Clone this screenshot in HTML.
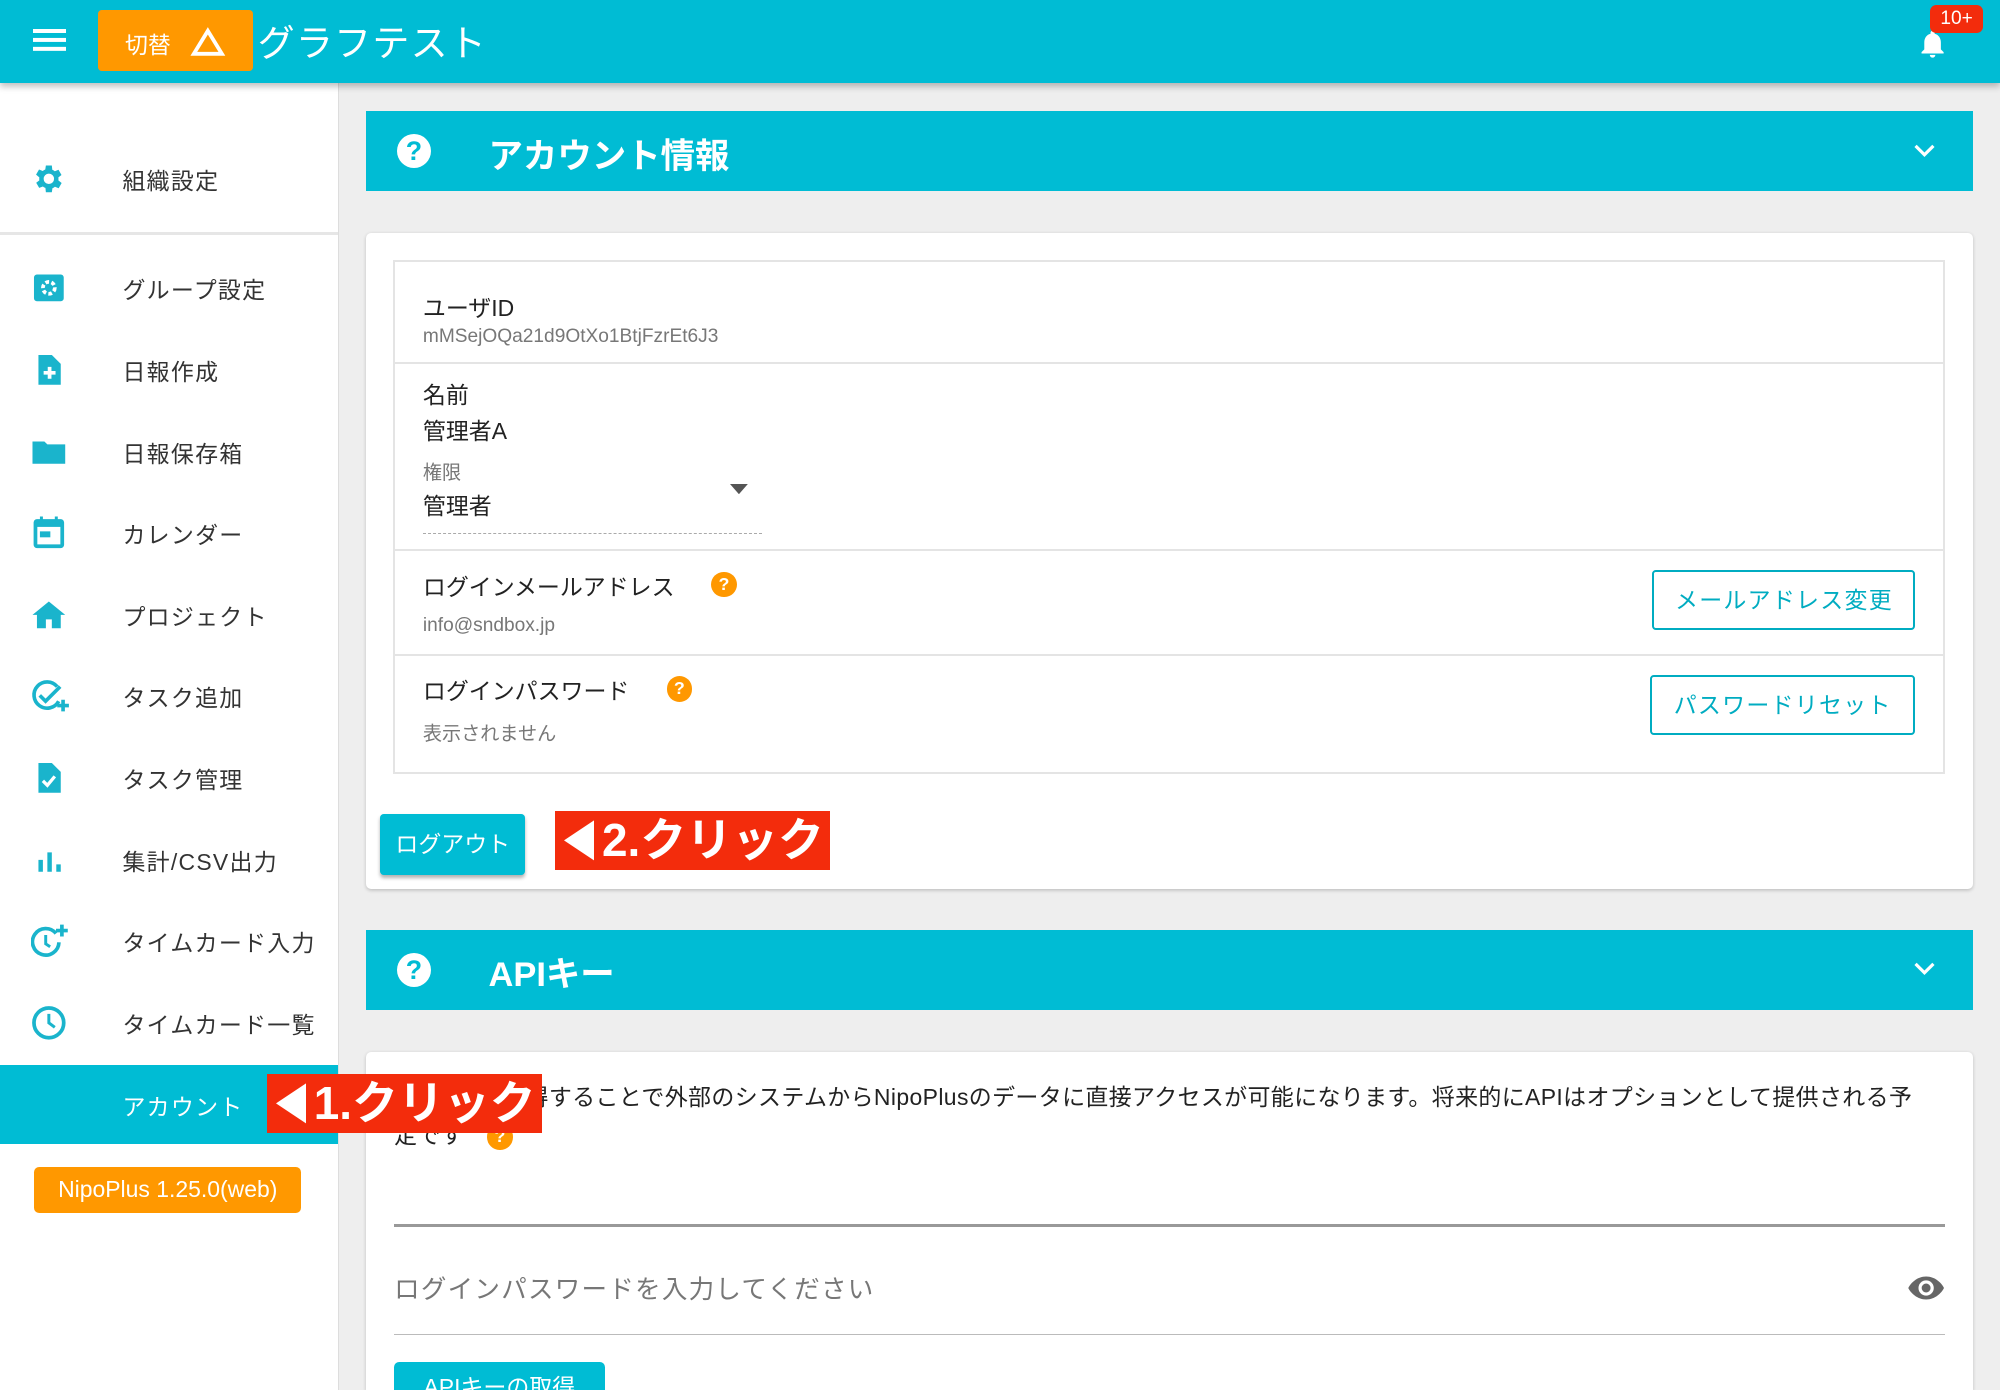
<!DOCTYPE html>
<html><head><meta charset="utf-8"><style>
html,body{margin:0;padding:0;overflow:hidden}
html{width:2000px;height:1390px}
body{width:1568px;height:1090px;zoom:1.27551;overflow:hidden;background:#eeeeee;font-family:"Liberation Sans","Noto Sans CJK JP",sans-serif;color:#222;position:relative}
.a{position:absolute}
.top{left:0;top:0;width:1568px;height:65px;background:#00bcd4;box-shadow:0 3px 5px rgba(0,0,0,.25);z-index:5}
.side{left:0;top:65px;width:265px;height:1025px;background:#fff;border-right:1px solid #ddd}
.item{position:absolute;left:0;width:265px;height:64px}
.item svg{position:absolute;left:24px;top:50%;margin-top:-14px}
.item span{position:absolute;left:96px;top:50%;transform:translateY(-50%);font-size:18px;color:#333;letter-spacing:1px}
.hdr{left:287px;width:1260px;height:63px;background:#00bcd4;color:#fff}
.hdr b{position:absolute;left:96px;top:13px;font-size:27px}
.card{background:#fff;border-radius:4px;box-shadow:0 1px 3px rgba(0,0,0,.2)}
.row{position:absolute;left:0;width:1214px;border-top:2px solid #e4e4e4}
.lbl{position:absolute;left:22px;font-size:18px;color:#222}
.sub{position:absolute;left:22px;font-size:15px;color:#777}
.ob{position:absolute;border:2px solid #00acc1;border-radius:3px;color:#00acc1;font-size:18px;text-align:center;letter-spacing:1px}
.q{display:inline-block;width:20px;height:20px;border-radius:50%;background:#ff9800;color:#fff;font-size:14px;font-weight:bold;text-align:center;line-height:20px}
.red{background:#f32c0c;color:#fff;font-weight:bold;font-size:36px;line-height:46px;white-space:nowrap;z-index:10}
</style></head><body>
<div class="a top">
  <div class="a" style="left:26px;top:23px;width:26px;height:3px;background:#fff;box-shadow:0 7px 0 #fff,0 14px 0 #fff"></div>
  <div class="a" style="left:77px;top:8px;width:121px;height:48px;background:#ff9800;border-radius:3px;color:#fff">
    <span class="a" style="left:21px;top:12px;font-size:18px">切替</span>
    <svg class="a" style="left:72px;top:13px" width="28" height="24" viewBox="0 0 28 24"><path d="M14 3 L25 21 L3 21 Z" fill="none" stroke="#fff" stroke-width="3"/></svg>
  </div>
  <span class="a" style="left:202px;top:10px;font-size:29px;color:#fff;letter-spacing:1px">グラフテスト</span>
  <svg class="a" style="left:1502px;top:20px" width="26" height="28" viewBox="0 0 24 24"><path d="M12 22a2 2 0 0 0 2-2h-4a2 2 0 0 0 2 2zm6-6V11c0-3-1.6-5.6-4.5-6.3V4a1.5 1.5 0 0 0-3 0v.7C7.6 5.4 6 8 6 11v5l-2 2v1h16v-1z" fill="#fff"/></svg>
  <div class="a" style="left:1513px;top:4px;width:42px;height:22px;background:#f32c0c;border-radius:5px;color:#fff;font-size:15px;text-align:center;line-height:22px">10+</div>
</div>
<div class="a side">
  <div class="item" style="top:43px"><svg width="28" height="28" viewBox="0 0 24 24"><path fill="#1ab4cc" d="M19.4 13a7.5 7.5 0 0 0 0-2l2.1-1.6-2-3.5-2.5 1a7 7 0 0 0-1.7-1L15 3h-4l-.4 2.7a7 7 0 0 0-1.7 1l-2.5-1-2 3.5L6.6 11a7.5 7.5 0 0 0 0 2l-2.1 1.6 2 3.5 2.5-1a7 7 0 0 0 1.7 1L11 21h4l.4-2.7a7 7 0 0 0 1.7-1l2.5 1 2-3.5zM13 15.5a3.5 3.5 0 1 1 0-7 3.5 3.5 0 0 1 0 7z" transform="translate(-1 0)"/></svg><span>組織設定</span></div>
  <div class="a" style="left:0;top:117px;width:265px;height:2px;background:#e6e6e6"></div>
  <div class="item" style="top:129px"><svg width="28" height="28" viewBox="0 0 24 24"><rect x="2" y="3" width="20" height="18" rx="2" fill="#1ab4cc"/><circle cx="12" cy="12" r="4" fill="none" stroke="#fff" stroke-width="2.5" stroke-dasharray="2.5 1.6"/></svg><span>グループ設定</span></div>
  <div class="item" style="top:193px"><svg width="28" height="28" viewBox="0 0 24 24"><path d="M5 2h9l6 6v14H5z" fill="#1ab4cc"/><path d="M12.5 10v8M8.5 14h8" stroke="#fff" stroke-width="2.5"/></svg><span>日報作成</span></div>
  <div class="item" style="top:257px"><svg width="28" height="28" viewBox="0 0 24 24"><path d="M1 5h8l2 2h12v13H1z" fill="#1ab4cc"/></svg><span>日報保存箱</span></div>
  <div class="item" style="top:321px"><svg width="28" height="28" viewBox="0 0 24 24"><rect x="3" y="4" width="18" height="17" rx="1" fill="none" stroke="#1ab4cc" stroke-width="2.5"/><rect x="3" y="4" width="18" height="4" fill="#1ab4cc"/><rect x="6" y="11" width="7" height="4" fill="#1ab4cc"/><path d="M7 1v4M17 1v4" stroke="#1ab4cc" stroke-width="2"/></svg><span>カレンダー</span></div>
  <div class="item" style="top:385px"><svg width="28" height="28" viewBox="0 0 24 24"><path d="M12 3 1 12h3v9h6v-6h4v6h6v-9h3z" fill="#1ab4cc"/></svg><span>プロジェクト</span></div>
  <div class="item" style="top:449px"><svg width="32" height="28" viewBox="0 0 28 24"><path d="M18 5a9 9 0 1 0 1 10" fill="none" stroke="#1ab4cc" stroke-width="2.5"/><path d="M6 11l4 4 10-10" fill="none" stroke="#1ab4cc" stroke-width="2.5"/><path d="M22 14v8M18 18h8" stroke="#1ab4cc" stroke-width="2.5"/></svg><span>タスク追加</span></div>
  <div class="item" style="top:513px"><svg width="28" height="28" viewBox="0 0 24 24"><path d="M5 2h9l6 6v14H5z" fill="#1ab4cc"/><path d="M8 14l3 3 5-6" fill="none" stroke="#fff" stroke-width="2.2"/></svg><span>タスク管理</span></div>
  <div class="item" style="top:577px"><svg width="28" height="28" viewBox="0 0 24 24"><path d="M5 12h3v8H5zM11 7h3v13h-3zM17 15h3v5h-3z" fill="#1ab4cc"/></svg><span>集計/CSV出力</span></div>
  <div class="item" style="top:641px"><svg width="30" height="28" viewBox="0 0 26 24"><path d="M17 7a9 9 0 1 0 2 6" fill="none" stroke="#1ab4cc" stroke-width="2.5"/><path d="M10 8v6l3 2" fill="none" stroke="#1ab4cc" stroke-width="2"/><path d="M21 1v8M17 5h8" stroke="#1ab4cc" stroke-width="2.5"/></svg><span>タイムカード入力</span></div>
  <div class="item" style="top:705px"><svg width="28" height="28" viewBox="0 0 24 24"><circle cx="12" cy="12" r="10" fill="none" stroke="#1ab4cc" stroke-width="2.5"/><path d="M12 6v6l4 3" fill="none" stroke="#1ab4cc" stroke-width="2"/></svg><span>タイムカード一覧</span></div>
  <div class="item" style="top:770px;height:62px;background:#00bcd4"><span style="color:#fff">アカウント</span></div>
  <div class="a" style="left:27px;top:850px;width:209px;height:36px;background:#ff9800;border-radius:4px;color:#fff;font-size:18px;text-align:center;line-height:36px">NipoPlus 1.25.0(web)</div>
</div>

<div class="a hdr" style="top:87px">
  <div class="a" style="left:24px;top:18px;width:27px;height:27px;border-radius:50%;background:#fff;color:#00bcd4;font-weight:bold;font-size:21px;text-align:center;line-height:27px">?</div>
  <b>アカウント情報</b>
  <svg class="a" style="left:1213px;top:24px" width="18" height="14" viewBox="0 0 18 14"><path d="M2 3l7 7 7-7" fill="none" stroke="#fff" stroke-width="2.5"/></svg>
</div>
<div class="a card" style="left:287px;top:183px;width:1260px;height:514px">
  <div class="a" style="left:21px;top:21px;width:1214px;height:400px;border:2px solid #e4e4e4">
    <div class="lbl" style="top:21px">ユーザID</div>
    <div class="sub" style="top:50px">mMSejOQa21d9OtXo1BtjFzrEt6J3</div>
    <div class="row" style="top:78px;height:147px">
      <div class="lbl" style="top:10px">名前</div>
      <div class="lbl" style="top:38px">管理者A</div>
      <div class="sub" style="top:73px">権限</div>
      <div class="lbl" style="top:97px">管理者</div>
      <svg class="a" style="left:263px;top:94px" width="14" height="8"><path d="M0 0h14L7 8z" fill="#555"/></svg>
      <div class="a" style="left:22px;top:133px;width:266px;border-top:1px dashed #aaa"></div>
    </div>
    <div class="row" style="top:225px;height:82px">
      <div class="lbl" style="top:13px">ログインメールアドレス</div>
      <span class="q a" style="left:248px;top:16px">?</span>
      <div class="sub" style="top:50px">info@sndbox.jp</div>
      <div class="ob" style="left:986px;top:15px;width:203px;height:44px;line-height:44px">メールアドレス変更</div>
    </div>
    <div class="row" style="top:307px;height:91px">
      <div class="lbl" style="top:13px">ログインパスワード</div>
      <span class="q a" style="left:213px;top:16px">?</span>
      <div class="sub" style="top:49px">表示されません</div>
      <div class="ob" style="left:984px;top:15px;width:205px;height:44px;line-height:44px">パスワードリセット</div>
    </div>
  </div>
  <div class="a" style="left:11px;top:455px;width:114px;height:48px;background:#00bcd4;border-radius:3px;box-shadow:0 2px 3px rgba(0,0,0,.3);color:#fff;font-size:18px;text-align:center;line-height:48px">ログアウト</div>
</div>
<div class="a red" style="left:435px;top:636px;width:216px;height:46px"><svg style="position:absolute;left:7px;top:7px" width="24" height="32"><path d="M24 0v32L0 16z" fill="#fff"/></svg><span style="position:absolute;left:37px;top:0">2.クリック</span></div>

<div class="a hdr" style="top:729px">
  <div class="a" style="left:24px;top:18px;width:27px;height:27px;border-radius:50%;background:#fff;color:#00bcd4;font-weight:bold;font-size:21px;text-align:center;line-height:27px">?</div>
  <b>APIキー</b>
  <svg class="a" style="left:1213px;top:24px" width="18" height="14" viewBox="0 0 18 14"><path d="M2 3l7 7 7-7" fill="none" stroke="#fff" stroke-width="2.5"/></svg>
</div>
<div class="a card" style="left:287px;top:825px;width:1260px;height:265px;border-radius:4px 4px 0 0">
  <div class="a" style="left:22px;top:20px;width:1200px;font-size:18px;line-height:30px;color:#222;letter-spacing:0.3px">APIキーを取得することで外部のシステムからNipoPlusのデータに直接アクセスが可能になります。将来的にAPIはオプションとして提供される予定です　<span class="q" style="vertical-align:middle">?</span></div>
  <div class="a" style="left:22px;top:135px;width:1216px;height:2px;background:#999"></div>
  <div class="a" style="left:22px;top:170px;font-size:20px;color:#777;letter-spacing:1px">ログインパスワードを入力してください</div>
  <svg class="a" style="left:1208px;top:174px" width="30" height="22" viewBox="0 0 30 22"><path d="M15 2C8 2 3 7 1 11c2 4 7 9 14 9s12-5 14-9C27 7 22 2 15 2z" fill="#666"/><circle cx="15" cy="11" r="6" fill="#fff"/><circle cx="15" cy="11" r="3.5" fill="#666"/></svg>
  <div class="a" style="left:22px;top:221px;width:1216px;height:1px;background:#bbb"></div>
  <div class="a" style="left:22px;top:243px;width:165px;height:22px;background:#00bcd4;border-radius:4px 4px 0 0;color:#fff;font-size:18px;text-align:center;line-height:40px;overflow:hidden">APIキーの取得</div>
</div>
<div class="a red" style="left:209px;top:842px;width:216px;height:46px"><svg style="position:absolute;left:7px;top:7px" width="24" height="32"><path d="M24 0v32L0 16z" fill="#fff"/></svg><span style="position:absolute;left:37px;top:0">1.クリック</span></div>
</body></html>
